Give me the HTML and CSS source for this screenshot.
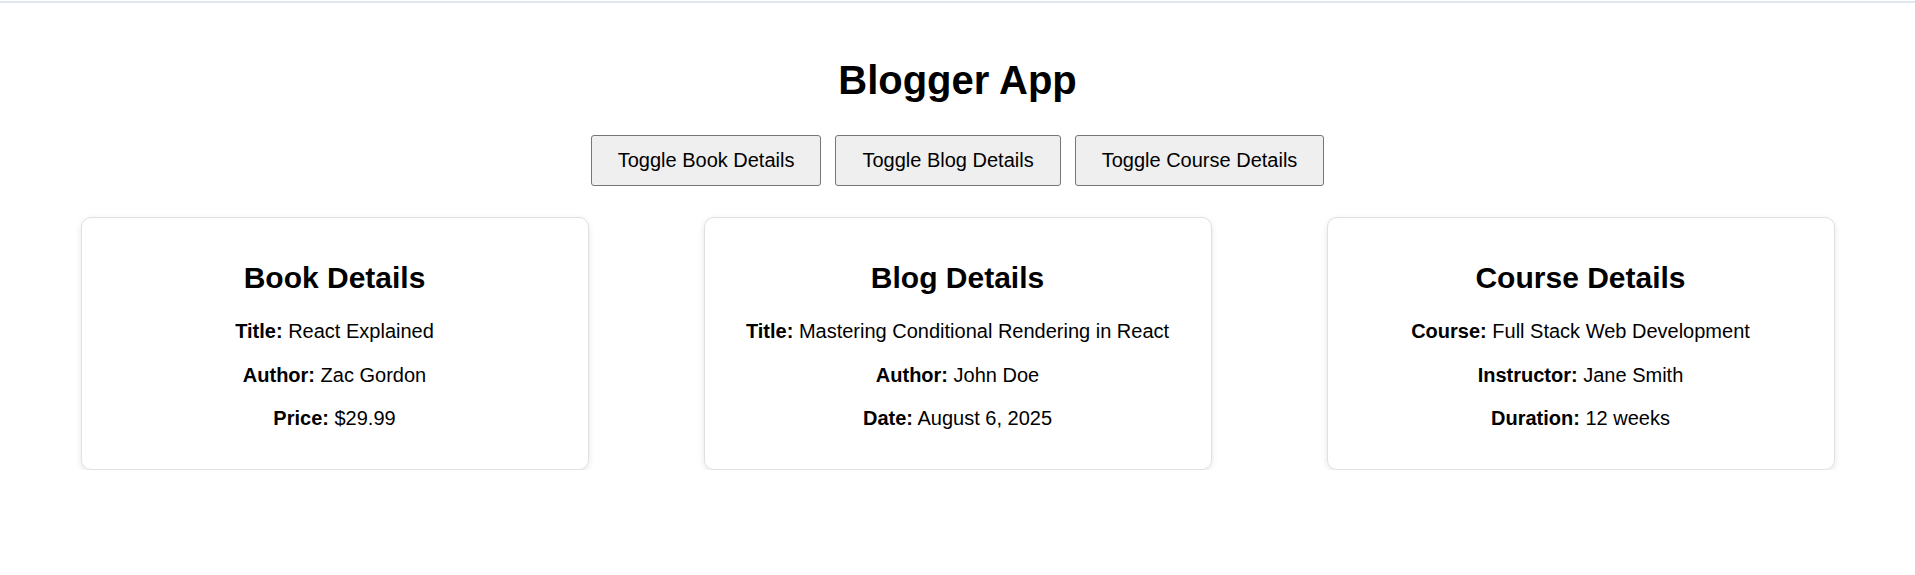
FILE: index.html
```html
<!DOCTYPE html>
<html lang="en">
<head>
<meta charset="utf-8">
<title>Blogger App</title>
<link rel="stylesheet" href="styles.css">
</head>
<body>
<div class="topline"></div>
<div class="app">
  <h1 class="app-title">Blogger App</h1>
  <div class="toolbar">
    <button class="toggle-btn">Toggle Book Details</button>
    <button class="toggle-btn">Toggle Blog Details</button>
    <button class="toggle-btn">Toggle Course Details</button>
  </div>
  <div class="cards">
    <section class="card">
      <h2 class="card-title">Book Details</h2>
      <p class="card-line"><strong>Title:</strong> React Explained</p>
      <p class="card-line"><strong>Author:</strong> Zac Gordon</p>
      <p class="card-line"><strong>Price:</strong> $29.99</p>
    </section>
    <section class="card">
      <h2 class="card-title">Blog Details</h2>
      <p class="card-line"><strong>Title:</strong> Mastering Conditional Rendering in React</p>
      <p class="card-line"><strong>Author:</strong> John Doe</p>
      <p class="card-line"><strong>Date:</strong> August 6, 2025</p>
    </section>
    <section class="card">
      <h2 class="card-title">Course Details</h2>
      <p class="card-line"><strong>Course:</strong> Full Stack Web Development</p>
      <p class="card-line"><strong>Instructor:</strong> Jane Smith</p>
      <p class="card-line"><strong>Duration:</strong> 12 weeks</p>
    </section>
  </div>
</div>
</body>
</html>
```
FILE: styles.css
```css
html, body {
  margin: 0;
  padding: 0;
  background: #ffffff;
}

body {
  font-family: "Liberation Sans", Arial, sans-serif;
  color: #000000;
  font-size: 20px;
}

.topline {
  margin-top: 1px;
  height: 2px;
  background: #dfe6ef;
}

.app {
  padding-top: 55px;
  text-align: center;
}

.app-title {
  margin: 0 0 32px;
  font-size: 40px;
  font-weight: 700;
  line-height: normal;
}

.toolbar {
  display: flex;
  justify-content: center;
  gap: 14px;
  margin: 0;
}

.toggle-btn {
  font-family: "Liberation Sans", Arial, sans-serif;
  font-size: 20px;
  line-height: 23px;
  color: #000000;
  background: #efefef;
  border: 1px solid #767676;
  border-radius: 3px;
  padding: 13px 26px;
  margin: 0;
}

.cards {
  display: flex;
  justify-content: center;
  gap: 115px;
  margin-top: 31px;
}

.card {
  box-sizing: border-box;
  width: 508px;
  border: 1px solid #e0e0e0;
  border-radius: 10px;
  box-shadow: 0 2px 6px rgba(0, 0, 0, 0.1);
  padding: 18px;
  text-align: center;
}

.card-title {
  margin: 25px 0;
  font-size: 30px;
  font-weight: 700;
  line-height: normal;
}

.card-line {
  margin: 20.5px 0;
  font-size: 20px;
  line-height: 23px;
}
```
